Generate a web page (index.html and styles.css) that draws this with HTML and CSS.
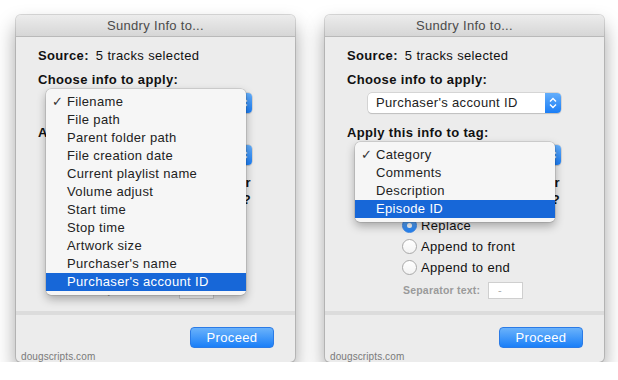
FILE: index.html
```html
<!DOCTYPE html>
<html>
<head>
<meta charset="utf-8">
<link rel="stylesheet" href="styles.css">
</head>
<body>
<div class="win">
  <div class="titlebar">Sundry Info to...</div>
  <div class="main">
    <div class="row"><b>Source:</b><span class="src">5 tracks selected</span></div>
    <div class="label l1">Choose info to apply:</div>
    <div class="select s1"><span class="sel-text">Filename</span><span class="stepper"><svg width="16" height="20" viewBox="0 0 16 20"><path d="M5 8.5 L8 5.5 L11 8.5 M5 11.5 L8 14.5 L11 11.5" fill="none" stroke="#fff" stroke-width="1.4"/></svg></span></div>
    <div class="label l2">Apply this info to tag:</div>
    <div class="select s2"><span class="sel-text">Category</span><span class="stepper"><svg width="16" height="20" viewBox="0 0 16 20"><path d="M5 8.5 L8 5.5 L11 8.5 M5 11.5 L8 14.5 L11 11.5" fill="none" stroke="#fff" stroke-width="1.4"/></svg></span></div>
    <div class="question">
      <div class="qline">or</div>
      <div class="qline">it?</div>
    </div>
    <div class="radios">
      <div class="radio"><span class="dot on"></span>Replace</div>
      <div class="radio"><span class="dot"></span>Append to front</div>
      <div class="radio"><span class="dot"></span>Append to end</div>
    </div>
    <div class="seprow"><span class="seplabel">Separator text:</span><span class="sepinput">-</span></div>
  </div>
  <div class="divider"></div>
  <div class="footer">
    <div class="btnrow"><span class="btn">Proceed</span></div>
    <div class="credit">dougscripts.com</div>
  </div>
  <div class="menu menu-left">
    <div class="item"><span class="check">✓</span>Filename</div>
    <div class="item">File path</div>
    <div class="item">Parent folder path</div>
    <div class="item">File creation date</div>
    <div class="item">Current playlist name</div>
    <div class="item">Volume adjust</div>
    <div class="item">Start time</div>
    <div class="item">Stop time</div>
    <div class="item">Artwork size</div>
    <div class="item">Purchaser's name</div>
    <div class="item hl">Purchaser's account ID</div>
  </div>
</div>

<div class="win">
  <div class="titlebar">Sundry Info to...</div>
  <div class="main">
    <div class="row"><b>Source:</b><span class="src">5 tracks selected</span></div>
    <div class="label l1">Choose info to apply:</div>
    <div class="select s1"><span class="sel-text">Purchaser's account ID</span><span class="stepper"><svg width="16" height="20" viewBox="0 0 16 20"><path d="M5 8.5 L8 5.5 L11 8.5 M5 11.5 L8 14.5 L11 11.5" fill="none" stroke="#fff" stroke-width="1.4"/></svg></span></div>
    <div class="label l2">Apply this info to tag:</div>
    <div class="select s2"><span class="sel-text">Category</span><span class="stepper"><svg width="16" height="20" viewBox="0 0 16 20"><path d="M5 8.5 L8 5.5 L11 8.5 M5 11.5 L8 14.5 L11 11.5" fill="none" stroke="#fff" stroke-width="1.4"/></svg></span></div>
    <div class="question">
      <div class="qline">or</div>
      <div class="qline">it?</div>
    </div>
    <div class="radios">
      <div class="radio"><span class="dot on"></span>Replace</div>
      <div class="radio"><span class="dot"></span>Append to front</div>
      <div class="radio"><span class="dot"></span>Append to end</div>
    </div>
    <div class="seprow"><span class="seplabel">Separator text:</span><span class="sepinput">-</span></div>
  </div>
  <div class="divider"></div>
  <div class="footer">
    <div class="btnrow"><span class="btn">Proceed</span></div>
    <div class="credit">dougscripts.com</div>
  </div>
  <div class="menu menu-right">
    <div class="item"><span class="check">✓</span>Category</div>
    <div class="item">Comments</div>
    <div class="item">Description</div>
    <div class="item hl">Episode ID</div>
  </div>
</div>
</body>
</html>
```

FILE: styles.css
```css
html, body {
  margin: 0;
  background: #ffffff;
}
body {
  display: flex;
  gap: 30px;
  padding: 15px 0 0 16px;
  font-family: "Liberation Sans", Arial, sans-serif;
  font-size: 13px;
  color: #111;
  letter-spacing: 0.35px;
}
.win {
  position: relative;
  width: 279px;
  height: 347px;
  background: #ececec;
  border-radius: 5px;
  box-shadow: 0 0 0 1px rgba(0,0,0,0.14), 0 11px 20px rgba(0,0,0,0.38);
}
.titlebar {
  height: 21px;
  line-height: 21px;
  text-align: center;
  color: #4b4b4b;
  letter-spacing: 0.3px;
  background: linear-gradient(#ececec, #d6d6d6);
  border-bottom: 1px solid #b9b9b9;
  border-radius: 5px 5px 0 0;
}
.main {
  padding: 10px 0 0 22px;
}
.row {
  height: 18px;
  line-height: 18px;
}
.src {
  margin-left: 7px;
}
.label {
  height: 18px;
  line-height: 18px;
  font-weight: bold;
}
.l1 { margin-top: 6px; }
.l2 { margin-top: 11px; }
.select {
  display: flex;
  width: 193px;
  height: 20px;
  margin-left: 21px;
  background: #fff;
  border-radius: 4px;
  box-shadow: 0 0 0 0.5px #bdbdbd, 0 1px 1px rgba(0,0,0,0.18);
  box-sizing: border-box;
}
.s1 { margin-top: 4px; }
.s2 { margin-top: 3px; }
.sel-text {
  flex: 1;
  padding-left: 8px;
  line-height: 20px;
  color: #222;
}
.stepper {
  width: 16px;
  height: 20px;
  border-radius: 0 4px 4px 0;
  background: linear-gradient(#64aefb, #1b7ef6);
}
.stepper svg { display: block; }
.question {
  margin-top: 9px;
  width: 213px;
}
.qline {
  height: 17px;
  line-height: 17px;
  font-weight: bold;
  text-align: right;
  white-space: nowrap;
}
.radios {
  margin-top: 7px;
  padding-left: 55px;
}
.radio {
  display: flex;
  align-items: center;
  height: 21px;
}
.dot {
  width: 15px;
  height: 15px;
  box-sizing: border-box;
  border-radius: 50%;
  border: 1px solid #a9a9a9;
  background: linear-gradient(#ffffff, #f3f3f3);
  margin-right: 4px;
  position: relative;
}
.dot.on {
  border-color: #3a86e8;
  background: linear-gradient(#6db2fb, #1f80f4);
}
.dot.on::after {
  content: "";
  position: absolute;
  left: 4px;
  top: 4px;
  width: 5px;
  height: 5px;
  border-radius: 50%;
  background: #fff;
}
.seprow {
  display: flex;
  align-items: center;
  height: 24px;
  padding-left: 56px;
}
.seplabel {
  font-size: 10.5px;
  font-weight: bold;
  color: #9a9a9a;
  letter-spacing: 0.2px;
}
.sepinput {
  margin-left: 8px;
  width: 35px;
  height: 17px;
  box-sizing: border-box;
  border: 1px solid #cfcfcf;
  background: #fff;
  color: #aaa;
  font-size: 11px;
  line-height: 15px;
  padding-left: 9px;
}
.divider {
  margin-top: 9px;
  height: 4px;
  background: #dcdcdc;
}
.footer {
  padding: 12px 21px 0 5px;
}
.btnrow {
  display: flex;
  justify-content: flex-end;
}
.btn {
  width: 84px;
  height: 21px;
  box-sizing: border-box;
  border-radius: 4px;
  border: 1px solid #2b7be6;
  background: linear-gradient(#6ab2fb, #1a7ff8);
  color: #fff;
  text-align: center;
  line-height: 19px;
  font-size: 13px;
}
.credit {
  margin-top: 2px;
  height: 13px;
  line-height: 13px;
  font-size: 10px;
  color: #7a7a7a;
  letter-spacing: 0.1px;
}
.menu {
  position: absolute;
  left: 30px;
  width: 200px;
  box-sizing: border-box;
  padding: 4px 0;
  background: #f6f6f6;
  border-radius: 5px;
  box-shadow: 0 0 0 0.5px rgba(0,0,0,0.2), 0 4px 10px rgba(0,0,0,0.3);
}
.menu-left { top: 74px; }
.menu-right { top: 127px; }
.item {
  position: relative;
  height: 18px;
  line-height: 18px;
  padding-left: 21px;
  color: #222;
}
.item.hl {
  background: #1767d8;
  color: #fff;
}
.check {
  position: absolute;
  left: 6px;
  top: 0;
  font-family: "DejaVu Sans", sans-serif;
  font-size: 13px;
  font-weight: bold;
  color: #333;
}
```
